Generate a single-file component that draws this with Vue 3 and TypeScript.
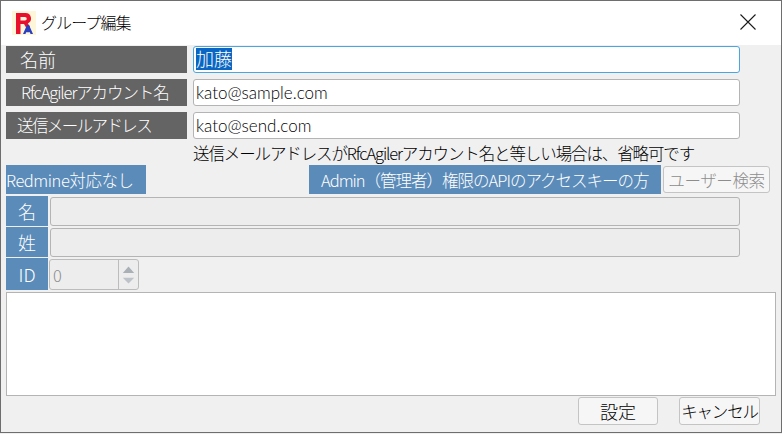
<script setup lang="ts">
const fieldRows = [
  { label: '名前', value: '', selected: '加藤', focused: true, cls: 'c1' },
  { label: 'RfcAgilerアカウント名', value: 'kato@sample.com', selected: '', focused: false, cls: 'c2' },
  { label: '送信メールアドレス', value: 'kato@send.com', selected: '', focused: false, cls: 'c3' },
]
</script>

<template>
  <div class="win">
    <header class="title">
      <svg class="logo" width="24" height="24" viewBox="0 0 24 24">
        <rect width="24" height="24" fill="#fdf6d8" />
        <path d="M4 2h9.500a5.500 5.500 0 0 1 2.300 10.500L18 15.500l-2.500 3.500-3.500-6H8.500v10H4z M8.500 6v3.500h4.500a1.750 1.750 0 0 0 0-3.500z" fill="#e8102c" fill-rule="evenodd" />
        <path d="M11 23l4-9h2l4 9h-2.500l-.6-1.700h-3.800L13.500 23z" fill="#2a3fc0" />
      </svg>
      <span class="title-text">グループ編集</span>
      <svg class="close" width="16" height="16" viewBox="0 0 16 16">
        <path d="M.5.500l15 15M15.500.500l-15 15" stroke="#1a1a1a" stroke-width="1.100" fill="none" />
      </svg>
    </header>

    <main class="body">
      <div v-for="r in fieldRows" :key="r.label" class="field-row">
        <div class="label dark" :class="r.cls">{{ r.label }}</div>
        <div class="input" :class="{ focused: r.focused }">
          <span v-if="r.selected" class="sel">{{ r.selected }}</span>{{ r.value }}
        </div>
      </div>

      <div class="note">送信メールアドレスがRfcAgilerアカウント名と等しい場合は、省略可です</div>

      <div class="redmine-row">
        <div class="blue redmine">Redmine対応なし</div>
        <div class="blue admin">Admin（管理者）権限のAPIのアクセスキーの方</div>
        <div class="btn search">ユーザー検索</div>
      </div>

      <div class="mini-row r-name">
        <div class="blue short">名</div>
        <div class="input disabled"></div>
      </div>
      <div class="mini-row r-sei">
        <div class="blue short">姓</div>
        <div class="input disabled"></div>
      </div>
      <div class="mini-row r-id">
        <div class="blue short">ID</div>
        <div class="spin">
          <span class="spin-val">0</span>
          <div class="spin-btns">
            <svg width="20" height="28" viewBox="0 0 20 28">
              <path d="M4 12l6-7 6 7z" fill="#a9b0b6" />
              <path d="M4 17h12l-6 6z" fill="#bdc3c8" />
            </svg>
          </div>
        </div>
      </div>

      <div class="textarea"></div>

      <footer class="actions">
        <div class="btn ok">設定</div>
        <div class="btn cancel">キャンセル</div>
      </footer>
    </main>
  </div>
</template>

<style>
html, body { margin: 0; background: #f0f0f0; }
</style>

<style scoped>
.win {
  width: 782px;
  height: 433px;
  box-sizing: border-box;
  border: 1px solid #6e6e6e;
  background: #f0f0f0;
  font-family: "Noto Sans CJK JP", sans-serif;
  font-weight: 300;
  color: #000;
  overflow: hidden;
  display: flex;
  flex-direction: column;
}
.title {
  height: 44px;
  flex: none;
  background: #fff;
  display: flex;
  align-items: center;
  padding: 0 25px 0 11px;
  box-sizing: border-box;
}
.logo { flex: none; margin-top: -1px; }
.title-text {
  font-size: 16px;
  margin-left: 5px;
  margin-top: -2px;
  letter-spacing: -.9px;
}
.close { margin-left: auto; margin-top: -2px; }
.body {
  padding: 1px 5px 0 5px;
  display: flex;
  flex-direction: column;
  flex: 1;
}
.field-row {
  display: flex;
  height: 27px;
  margin-bottom: 6px;
}
.label {
  width: 181px;
  flex: none;
  display: flex;
  align-items: center;
  font-size: 16.500px;
  color: #fff;
  white-space: nowrap;
  box-sizing: border-box;
  line-height: 25px;
  padding-bottom: 1px;
}
.dark { background: #646464; }
.c1 { padding-left: 14px; font-size: 18px; }
.c2 { padding-left: 15px; letter-spacing: -1.100px; }
.c3 { padding-left: 11px; letter-spacing: -1.600px; }
.input {
  box-sizing: border-box;
  width: 547px;
  margin-left: 6px;
  border: 1px solid #b4b4b4;
  border-radius: 3px;
  background: #fff;
  font-family: "Lato", "Noto Sans CJK JP", sans-serif;
  font-size: 17px;
  line-height: 25px;
  padding-left: 2px;
  white-space: nowrap;
}
.input.focused {
  border-color: #4ba6e0;
}
.sel {
  background: #0a66c2;
  color: #fff;
  font-size: 18px;
}
.note {
  margin-left: 187px;
  height: 20px;
  line-height: 20px;
  margin-top: -2px;
  margin-bottom: 2px;
  font-size: 16.500px;
  letter-spacing: -1.120px;
  white-space: nowrap;
}
.redmine-row {
  display: flex;
  height: 29px;
  margin-bottom: 2px;
  align-items: stretch;
}
.blue {
  background: #5b8bb9;
  color: #fff;
  display: flex;
  align-items: center;
  white-space: nowrap;
  font-size: 16.500px;
}
.redmine { width: 140px; letter-spacing: -.45px; }
.admin {
  width: 352px;
  margin-left: 163px;
  padding-left: 12px;
  box-sizing: border-box;
  letter-spacing: -1px;
}
.btn {
  box-sizing: border-box;
  display: flex;
  align-items: center;
  justify-content: center;
  border: 1px solid #c4c4c4;
  border-radius: 3px;
  background: #f6f6f6;
  font-size: 16.500px;
  white-space: nowrap;
}
.search {
  width: 107px;
  margin-left: 2px;
  margin-top: 1px;
  margin-bottom: 1px;
  color: #8d8d8d;
  letter-spacing: -.4px;
}
.mini-row {
  display: flex;
  height: 30px;
  margin-bottom: 1px;
}
.r-id { height: 32px; margin-bottom: 2px; }
.short {
  width: 42px;
  flex: none;
  justify-content: center;
  font-size: 18px;
}
.input.disabled {
  width: 690px;
  margin-left: 2px;
  background: #ededed;
  border-color: #b4b4b4;
  margin-top: 1px;
}
.spin {
  box-sizing: border-box;
  width: 90px;
  margin-left: 1px;
  margin-top: 1px;
  border: 1px solid #bcbcbc;
  border-radius: 3px;
  background: #ededed;
  display: flex;
  align-items: center;
  justify-content: space-between;
  color: #8d8d8d;
  font-size: 16.500px;
}
.spin-val { padding-left: 3px; }
.spin-btns {
  width: 20px;
  height: 100%;
  border-left: 1px solid #bcbcbc;
  box-sizing: border-box;
  display: flex;
  align-items: center;
  justify-content: center;
}
.textarea {
  box-sizing: border-box;
  width: 770px;
  height: 104px;
  flex: none;
  background: #fff;
  border: 1px solid #b4b4b4;
}
.actions {
  display: flex;
  margin-top: 1px;
  padding-left: 572px;
}
.ok { width: 80px; height: 28px; font-size: 18px; }
.cancel { width: 81px; height: 28px; margin-left: 21px; letter-spacing: -1.200px; }
</style>
